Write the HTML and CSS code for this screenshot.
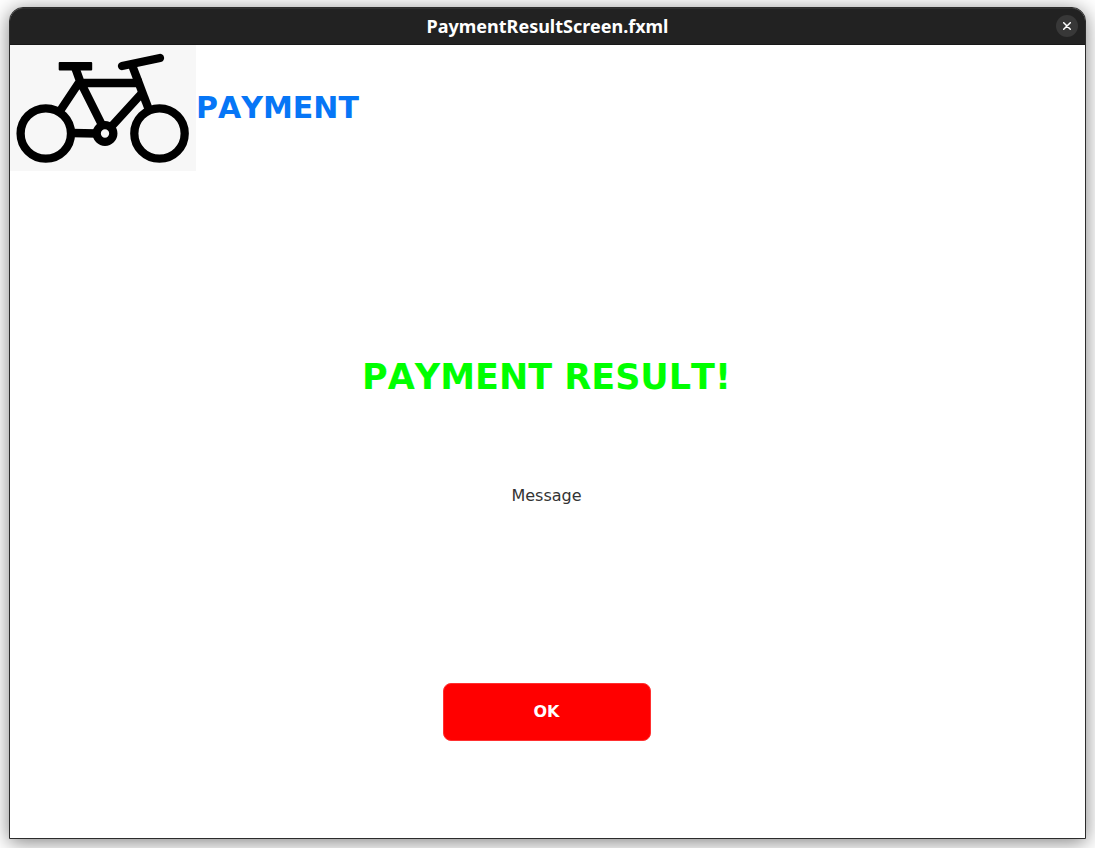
FILE: index.html
```html
<!DOCTYPE html>
<html lang="en">
<head>
<meta charset="utf-8">
<title>PaymentResultScreen.fxml</title>
<link rel="stylesheet" href="styles.css">
</head>
<body>
<div class="window">
  <header class="titlebar">
    <span class="window-title">PaymentResultScreen.fxml</span>
    <button class="close" type="button" aria-label="Close">
      <svg width="8" height="8" viewBox="0 0 8 8" aria-hidden="true"><path d="M0.7 0.7L7.3 7.3M7.3 0.7L0.7 7.3" stroke="#fff" stroke-width="1.5" stroke-linecap="round"/></svg>
    </button>
  </header>
  <div class="brand">
    <svg class="logo" viewBox="0 0 186 126" role="img" aria-label="Bicycle">
      <rect width="186" height="126" fill="#f7f7f7"/>
      <g fill="none" stroke="#000" stroke-width="8.300">
        <circle cx="35.800" cy="88.500" r="25.200"/>
        <circle cx="149.500" cy="88.500" r="25.200"/>
        <circle cx="95" cy="88.500" r="8.300"/>
        <path d="M65 22L70 36L93 82M70 36L50 66M70 38H132M62 88L87 88.500M101 82L133 47"/>
        <path d="M122 20L139 65"/>
        <path d="M112 21L150 13" stroke-linecap="round"/>
      </g>
      <rect x="48.700" y="17" width="33.500" height="8.500" rx="1"/>
    </svg>
    <h1 class="page-title">PAYMENT</h1>
  </div>
  <main class="content">
    <h2 class="result">PAYMENT RESULT!</h2>
    <p class="message">Message</p>
    <button class="ok" type="button">OK</button>
  </main>
</div>
</body>
</html>
```
FILE: styles.css
```css
* { box-sizing: border-box; }

body {
  margin: 0;
  min-height: 100vh;
  padding: 7px 9px 9px;
  display: flex;
  background: #fff;
  font-family: "DejaVu Sans", sans-serif;
  font-kerning: none;
  overflow: hidden;
}

.window {
  flex: 1;
  display: flex;
  flex-direction: column;
  border: 1px solid #2c2c2c;
  border-radius: 14px 14px 0 0;
  background: #fff;
  box-shadow: 0 3px 20px rgba(0, 0, 0, 0.5);
}

.titlebar {
  display: grid;
  grid-template-columns: 1fr auto 1fr;
  align-items: center;
  height: 37px;
  padding: 0 7px 2px;
  border-top: 1px solid #2f2f2f;
  border-bottom: 1px solid #181818;
  border-radius: 13px 13px 0 0;
  background: #222;
}

.window-title {
  grid-column: 2;
  color: #fff;
  font: bold 18px/24px "Noto Sans", "Open Sans", sans-serif;
}

.close {
  justify-self: end;
  display: flex;
  align-items: center;
  justify-content: center;
  width: 22px;
  height: 22px;
  padding: 0;
  border: 0;
  border-radius: 50%;
  background: #383838;
}

.brand {
  display: flex;
  align-items: center;
}

.logo {
  width: 186px;
  height: 126px;
}

.page-title {
  margin: 0;
  color: #0676f6;
  font-size: 30px;
  line-height: 38px;
}

.content {
  flex: 1;
  display: flex;
  flex-direction: column;
  align-items: center;
  justify-content: flex-end;
  padding: 0 2px 97px 0;
}

.result {
  margin: 0 0 88px;
  color: #0f0;
  font-size: 35px;
  line-height: 42px;
}

.message {
  margin: 0 0 177px;
  color: #333;
  font-size: 16px;
  line-height: 20px;
}

.ok {
  width: 208px;
  height: 58px;
  border: 1px solid #ff3030;
  border-radius: 8px;
  background: #f00;
  color: #fff;
  font: bold 16px/20px "DejaVu Sans", sans-serif;
}
```
